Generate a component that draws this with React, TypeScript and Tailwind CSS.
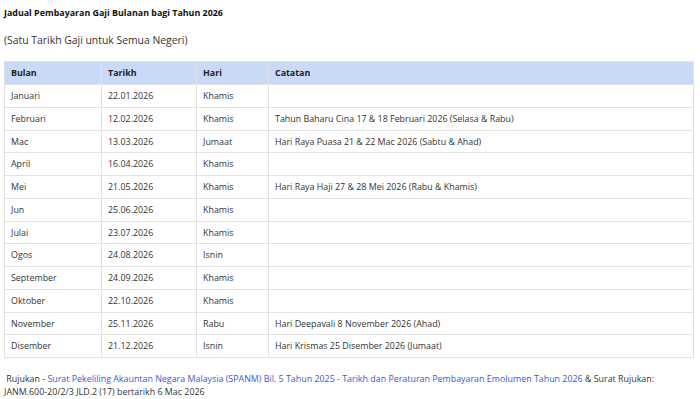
import React from "react";

interface Baris {
  bulan: string;
  tarikh: string;
  hari: string;
  catatan: string;
}

const jadual: Baris[] = [
  { bulan: "Januari", tarikh: "22.01.2026", hari: "Khamis", catatan: "" },
  { bulan: "Februari", tarikh: "12.02.2026", hari: "Khamis", catatan: "Tahun Baharu Cina 17 & 18 Februari 2026 (Selasa & Rabu)" },
  { bulan: "Mac", tarikh: "13.03.2026", hari: "Jumaat", catatan: "Hari Raya Puasa 21 & 22 Mac 2026 (Sabtu & Ahad)" },
  { bulan: "April", tarikh: "16.04.2026", hari: "Khamis", catatan: "" },
  { bulan: "Mei", tarikh: "21.05.2026", hari: "Khamis", catatan: "Hari Raya Haji 27 & 28 Mei 2026 (Rabu & Khamis)" },
  { bulan: "Jun", tarikh: "25.06.2026", hari: "Khamis", catatan: "" },
  { bulan: "Julai", tarikh: "23.07.2026", hari: "Khamis", catatan: "" },
  { bulan: "Ogos", tarikh: "24.08.2026", hari: "Isnin", catatan: "" },
  { bulan: "September", tarikh: "24.09.2026", hari: "Khamis", catatan: "" },
  { bulan: "Oktober", tarikh: "22.10.2026", hari: "Khamis", catatan: "" },
  { bulan: "November", tarikh: "25.11.2026", hari: "Rabu", catatan: "Hari Deepavali 8 November 2026 (Ahad)" },
  { bulan: "Disember", tarikh: "21.12.2026", hari: "Isnin", catatan: "Hari Krismas 25 Disember 2026 (Jumaat)" },
];

export default function App() {
  return (
    <div className="w-[700px] h-[399px] bg-white text-[#333] font-['Open_Sans',sans-serif] text-[8.9px] overflow-hidden">
      <div className="px-1 pt-[6px]">
        <h1 className="font-bold text-[8.9px] text-[#111] leading-[14px]">
          Jadual Pembayaran Gaji Bulanan bagi Tahun 2026
        </h1>
        <p className="mt-[13px] text-[10.4px] leading-[14px]">(Satu Tarikh Gaji untuk Semua Negeri)</p>

        {/* Jadual gaji */}
        <table className="mt-[14px] w-[690px] border-collapse table-fixed">
          <colgroup>
            <col className="w-[97px]" />
            <col className="w-[95px]" />
            <col className="w-[72px]" />
            <col />
          </colgroup>
          <thead>
            <tr className="bg-[#c9daf8] h-[23px]">
              <th className="border border-[#e2e2e2] text-left px-[6px] font-bold text-[#222]">Bulan</th>
              <th className="border border-[#e2e2e2] text-left px-[6px] font-bold text-[#222]">Tarikh</th>
              <th className="border border-[#e2e2e2] text-left px-[6px] font-bold text-[#222]">Hari</th>
              <th className="border border-[#e2e2e2] text-left px-[6px] font-bold text-[#222]">Catatan</th>
            </tr>
          </thead>
          <tbody>
            {jadual.map((b) => (
              <tr key={b.bulan} className="h-[22.75px]">
                <td className="border border-[#e2e2e2] px-[6px] py-0">{b.bulan}</td>
                <td className="border border-[#e2e2e2] px-[6px] py-0">{b.tarikh}</td>
                <td className="border border-[#e2e2e2] px-[6px] py-0">{b.hari}</td>
                <td className="border border-[#e2e2e2] px-[6px] py-0">{b.catatan}</td>
              </tr>
            ))}
          </tbody>
        </table>

        <p className="mt-[14px] leading-[13px] w-[660px]">
          &nbsp;Rujukan -{" "}
          <a className="text-[#3a5bd0]">
            Surat Pekeliling Akauntan Negara Malaysia (SPANM) Bil. 5 Tahun 2025 - Tarikh dan Peraturan Pembayaran Emolumen Tahun 2026
          </a>{" "}
          &amp; Surat Rujukan: JANM.600-20/2/3 JLD.2 (17) bertarikh 6 Mac 2026
        </p>
      </div>
    </div>
  );
}
